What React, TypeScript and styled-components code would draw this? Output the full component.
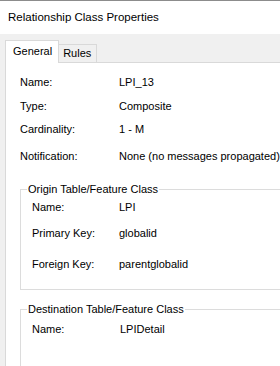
import * as React from 'react';
import styled, { createGlobalStyle } from 'styled-components';

const GlobalStyle = createGlobalStyle`
	html, body {
		margin: 0;
		padding: 0;
		background: #f0f0f0;
		overflow: hidden;
	}
	body {
		font-family: "Liberation Sans", Arial, sans-serif;
		font-size: 11px;
		color: #000;
	}
`;

const Window = styled.div`
	width: 280px;
	height: 366px;
	overflow: hidden;
	border-top: 1px solid #8c8c8c;
	box-sizing: border-box;
	display: flex;
	flex-flow: column;
`;

const TitleBar = styled.div`
	height: 32px;
	background: #fff;
	display: flex;
	align-items: center;
	padding-left: 8px;
	padding-bottom: 1px;
	font-size: 11.5px;
	flex-shrink: 0;
`;

const TabStrip = styled.div`
	display: flex;
	align-items: flex-end;
	margin-top: 6px;
	padding-left: 5px;
	height: 22px;
	position: relative;
	z-index: 1;
`;

const Tab = styled.div<{ active?: boolean }>`
	box-sizing: border-box;
	height: ${p => (p.active ? '23px' : '18px')};
	padding: ${p => (p.active ? '4px 6px 0 7px' : '2px 5px 0 4px')};
	margin-bottom: ${p => (p.active ? '-1px' : '0')};
	background: ${p => (p.active ? '#fff' : '#f0f0f0')};
	border: 1px solid #d9d9d9;
	border-bottom: none;
	margin-left: ${p => (p.active ? '0' : '-1px')};
	font-size: 11px;
`;

const Panel = styled.div`
	flex: 1;
	margin-left: 5px;
	width: 300px;
	background: #fff;
	border-top: 1px solid #d9d9d9;
	border-left: 1px solid #d9d9d9;
	padding: 6px 0 0 14px;
	box-sizing: border-box;
`;

const Row = styled.div<{ h: number; labelWidth: number }>`
	display: grid;
	grid-template-columns: ${p => p.labelWidth}px 1fr;
	align-items: center;
	height: ${p => p.h}px;
	white-space: nowrap;
`;

const Group = styled.fieldset<{ h: number }>`
	margin: 0;
	padding: 0 0 0 11px;
	border: 1px solid #dcdcdc;
	height: ${p => p.h}px;
	box-sizing: border-box;
	min-width: 0;
`;

const Legend = styled.legend`
	padding: 0 1px;
	margin-left: -5px;
	font-size: 11px;
`;

const GroupBody = styled.div`
	display: flex;
	flex-flow: column;
`;

const Spacer = styled.div<{ h: number }>`
	height: ${p => p.h}px;
`;

const general = [
	{ label: 'Name:', value: 'LPI_13', h: 26 },
	{ label: 'Type:', value: 'Composite', h: 22 },
	{ label: 'Cardinality:', value: '1 - M', h: 24 },
	{ label: 'Notification:', value: 'None (no messages propagated)', h: 29 },
];

const origin = [
	{ label: 'Name:', value: 'LPI', h: 24 },
	{ label: 'Primary Key:', value: 'globalid', h: 28 },
	{ label: 'Foreign Key:', value: 'parentglobalid', h: 34 },
];

export default function App() {
	return (
		<>
			<GlobalStyle />
			<Window>
				<TitleBar>Relationship Class Properties</TitleBar>
				<TabStrip>
					<Tab active>General</Tab>
					<Tab>Rules</Tab>
				</TabStrip>
				<Panel>
					{general.map(r => (
						<Row key={r.label} h={r.h} labelWidth={99}>
							<span>{r.label}</span>
							<span>{r.value}</span>
						</Row>
					))}
					<Spacer h={13} />
					<Group h={107}>
						<Legend>Origin Table/Feature Class</Legend>
						<GroupBody>
							{origin.map(r => (
								<Row key={r.label} h={r.h} labelWidth={87}>
									<span>{r.label}</span>
									<span>{r.value}</span>
								</Row>
							))}
						</GroupBody>
					</Group>
					<Spacer h={13} />
					<Group h={80}>
						<Legend>Destination Table/Feature Class</Legend>
						<GroupBody>
							<Row h={28} labelWidth={88}>
								<span>Name:</span>
								<span>LPIDetail</span>
							</Row>
						</GroupBody>
					</Group>
				</Panel>
			</Window>
		</>
	);
}
